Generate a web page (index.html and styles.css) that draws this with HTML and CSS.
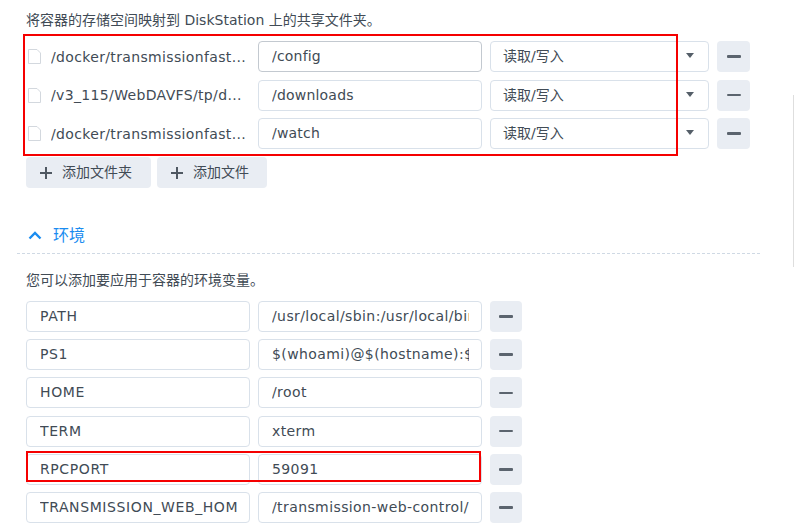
FILE: index.html
```html
<!DOCTYPE html>
<html lang="zh">
<head>
<meta charset="utf-8">
<link rel="stylesheet" href="styles.css">
</head>
<body>
<div class="page">
  <p class="desc">将容器的存储空间映射到 DiskStation 上的共享文件夹。</p>

  <div class="mounts">
    <div class="mrow">
      <svg class="cb" width="13" height="15" viewBox="0 0 13 15"><path d="M0.5 0.5H9L12.5 4V14.5H0.5Z" fill="#fff" stroke="#d3d8de"/></svg>
      <div class="path">/docker/transmissionfast...</div>
      <div class="field dark"><span class="v">/config</span></div>
      <div class="select"><span>读取/写入</span><i class="caret"></i></div>
      <div class="minus wide"><i></i></div>
    </div>
    <div class="mrow">
      <svg class="cb" width="13" height="15" viewBox="0 0 13 15"><path d="M0.5 0.5H9L12.5 4V14.5H0.5Z" fill="#fff" stroke="#d3d8de"/></svg>
      <div class="path">/v3_115/WebDAVFS/tp/d...</div>
      <div class="field"><span class="v">/downloads</span></div>
      <div class="select"><span>读取/写入</span><i class="caret"></i></div>
      <div class="minus wide"><i></i></div>
    </div>
    <div class="mrow">
      <svg class="cb" width="13" height="15" viewBox="0 0 13 15"><path d="M0.5 0.5H9L12.5 4V14.5H0.5Z" fill="#fff" stroke="#d3d8de"/></svg>
      <div class="path">/docker/transmissionfast...</div>
      <div class="field"><span class="v">/watch</span></div>
      <div class="select"><span>读取/写入</span><i class="caret"></i></div>
      <div class="minus wide"><i></i></div>
    </div>
  </div>

  <div class="addbar">
    <div class="btn b1"><span class="plus"></span>添加文件夹</div>
    <div class="btn b2"><span class="plus"></span>添加文件</div>
  </div>

  <div class="section">
    <svg class="chev" width="14" height="9" viewBox="0 0 14 9"><polyline points="1.5,7.5 7,2 12.5,7.5" fill="none" stroke="#1a8cf0" stroke-width="2.4"/></svg>
    <span class="stitle">环境</span>
  </div>

  <p class="desc2">您可以添加要应用于容器的环境变量。</p>

  <div class="envs">
    <div class="erow"><div class="field"><span class="v">PATH</span></div><div class="field val"><span class="v">/usr/local/sbin:/usr/local/bin:/usr/sbin:/usr/bin</span></div><div class="minus"><i></i></div></div>
    <div class="erow"><div class="field"><span class="v">PS1</span></div><div class="field val"><span class="v">$(whoami)@$(hostname):$(pwd)$</span></div><div class="minus"><i></i></div></div>
    <div class="erow"><div class="field"><span class="v">HOME</span></div><div class="field val"><span class="v">/root</span></div><div class="minus"><i></i></div></div>
    <div class="erow"><div class="field"><span class="v">TERM</span></div><div class="field val"><span class="v">xterm</span></div><div class="minus"><i></i></div></div>
    <div class="erow"><div class="field"><span class="v">RPCPORT</span></div><div class="field val"><span class="v">59091</span></div><div class="minus"><i></i></div></div>
    <div class="erow"><div class="field"><span class="v">TRANSMISSION_WEB_HOME</span></div><div class="field val"><span class="v">/transmission-web-control/</span></div><div class="minus"><i></i></div></div>
  </div>

  <div class="mark m1"></div>
  <div class="mark m2"></div>
  <div class="scrollline"></div>
</div>
</body>
</html>
```

FILE: styles.css
```css
html, body {
  margin: 0;
  padding: 0;
  background: #fff;
}
body {
  font-family: "DejaVu Sans", "Noto Sans CJK SC", sans-serif;
  font-size: 14px;
  color: #414b55;
}
.page {
  position: relative;
  width: 794px;
  height: 529px;
  overflow: hidden;
}
.desc {
  margin: 0;
  padding: 10px 0 0 26px;
  line-height: 20px;
}
.mounts {
  margin-top: 11px;
  padding-left: 28px;
  display: flex;
  flex-direction: column;
  gap: 7.5px;
}
.mrow, .erow {
  display: flex;
  align-items: center;
  height: 31px;
}
.cb {
  flex: none;
  display: block;
}
.path {
  width: 199px;
  margin-left: 10px;
  white-space: nowrap;
  overflow: hidden;
  letter-spacing: 0.35px;
}
.field {
  box-sizing: border-box;
  width: 224px;
  height: 31px;
  border: 1px solid #d9e1ea;
  border-radius: 4px;
  padding: 0 12px 0 13px;
  line-height: 29px;
  margin-right: 8px;
  flex: none;
}
.field .v {
  display: block;
  white-space: nowrap;
  overflow: hidden;
  letter-spacing: 0.6px;
}
.field.val .v {
  letter-spacing: 0.4px;
}
.mrow .field {
  margin-left: 8px;
}
.mrow .field .v {
  letter-spacing: 0.2px;
}
.field.dark {
  border-color: #c3c9d0;
}
.select {
  box-sizing: border-box;
  width: 219px;
  height: 31px;
  border: 1px solid #d9e1ea;
  border-radius: 4px;
  padding: 0 12px 0 12px;
  line-height: 29px;
  display: flex;
  align-items: center;
  justify-content: space-between;
  margin-right: 8px;
  flex: none;
}
.caret {
  width: 0;
  height: 0;
  border-left: 4.5px solid transparent;
  border-right: 4.5px solid transparent;
  border-top: 5px solid #555e68;
  margin-right: 2px;
  margin-top: -2px;
}
.minus {
  box-sizing: border-box;
  width: 32px;
  height: 31px;
  border-radius: 4px;
  background: #e9edf3;
  display: flex;
  align-items: center;
  justify-content: center;
  flex: none;
}
.minus.wide {
  width: 33px;
}
.minus i {
  display: block;
  width: 14px;
  height: 2.5px;
  background: #5b646e;
  border-radius: 1px;
}
.addbar {
  display: flex;
  gap: 6px;
  margin-top: 8px;
  padding-left: 26px;
}
.btn {
  box-sizing: border-box;
  height: 31px;
  border-radius: 4px;
  background: #e9edf3;
  display: flex;
  align-items: center;
  padding-left: 14px;
  line-height: 31px;
}
.b1 { width: 125px; }
.b2 { width: 110px; }
.plus {
  position: relative;
  width: 12px;
  height: 12px;
  margin-right: 10px;
  flex: none;
}
.plus::before, .plus::after {
  content: "";
  position: absolute;
  background: #4f5862;
}
.plus::before {
  left: 0; top: 5px; width: 12px; height: 2px;
}
.plus::after {
  left: 5px; top: 0; width: 2px; height: 12px;
}
.section {
  margin: 36px 0 0 17px;
  width: 743px;
  padding: 0 0 5px 11px;
  box-sizing: border-box;
  height: 30px;
  display: flex;
  align-items: center;
  border-bottom: 1px dashed #cfd9e4;
  line-height: 24px;
}
.chev {
  display: block;
  margin-right: 11px;
  margin-top: -2px;
}
.stitle {
  color: #1a8cf0;
  font-size: 16px;
}
.desc2 {
  margin: 16px 0 0 0;
  padding-left: 26px;
  line-height: 20px;
}
.envs {
  margin-top: 11px;
  padding-left: 26px;
  display: flex;
  flex-direction: column;
  gap: 7.2px;
}
.mark {
  position: absolute;
  box-sizing: border-box;
  border: 2px solid #f50000;
}
.m1 {
  left: 23px;
  top: 34px;
  width: 655px;
  height: 122px;
}
.m2 {
  left: 26px;
  top: 451px;
  width: 455px;
  height: 31px;
}
.scrollline {
  position: absolute;
  left: 793px;
  top: 95px;
  width: 1px;
  height: 172px;
  background: #dedede;
}
```
